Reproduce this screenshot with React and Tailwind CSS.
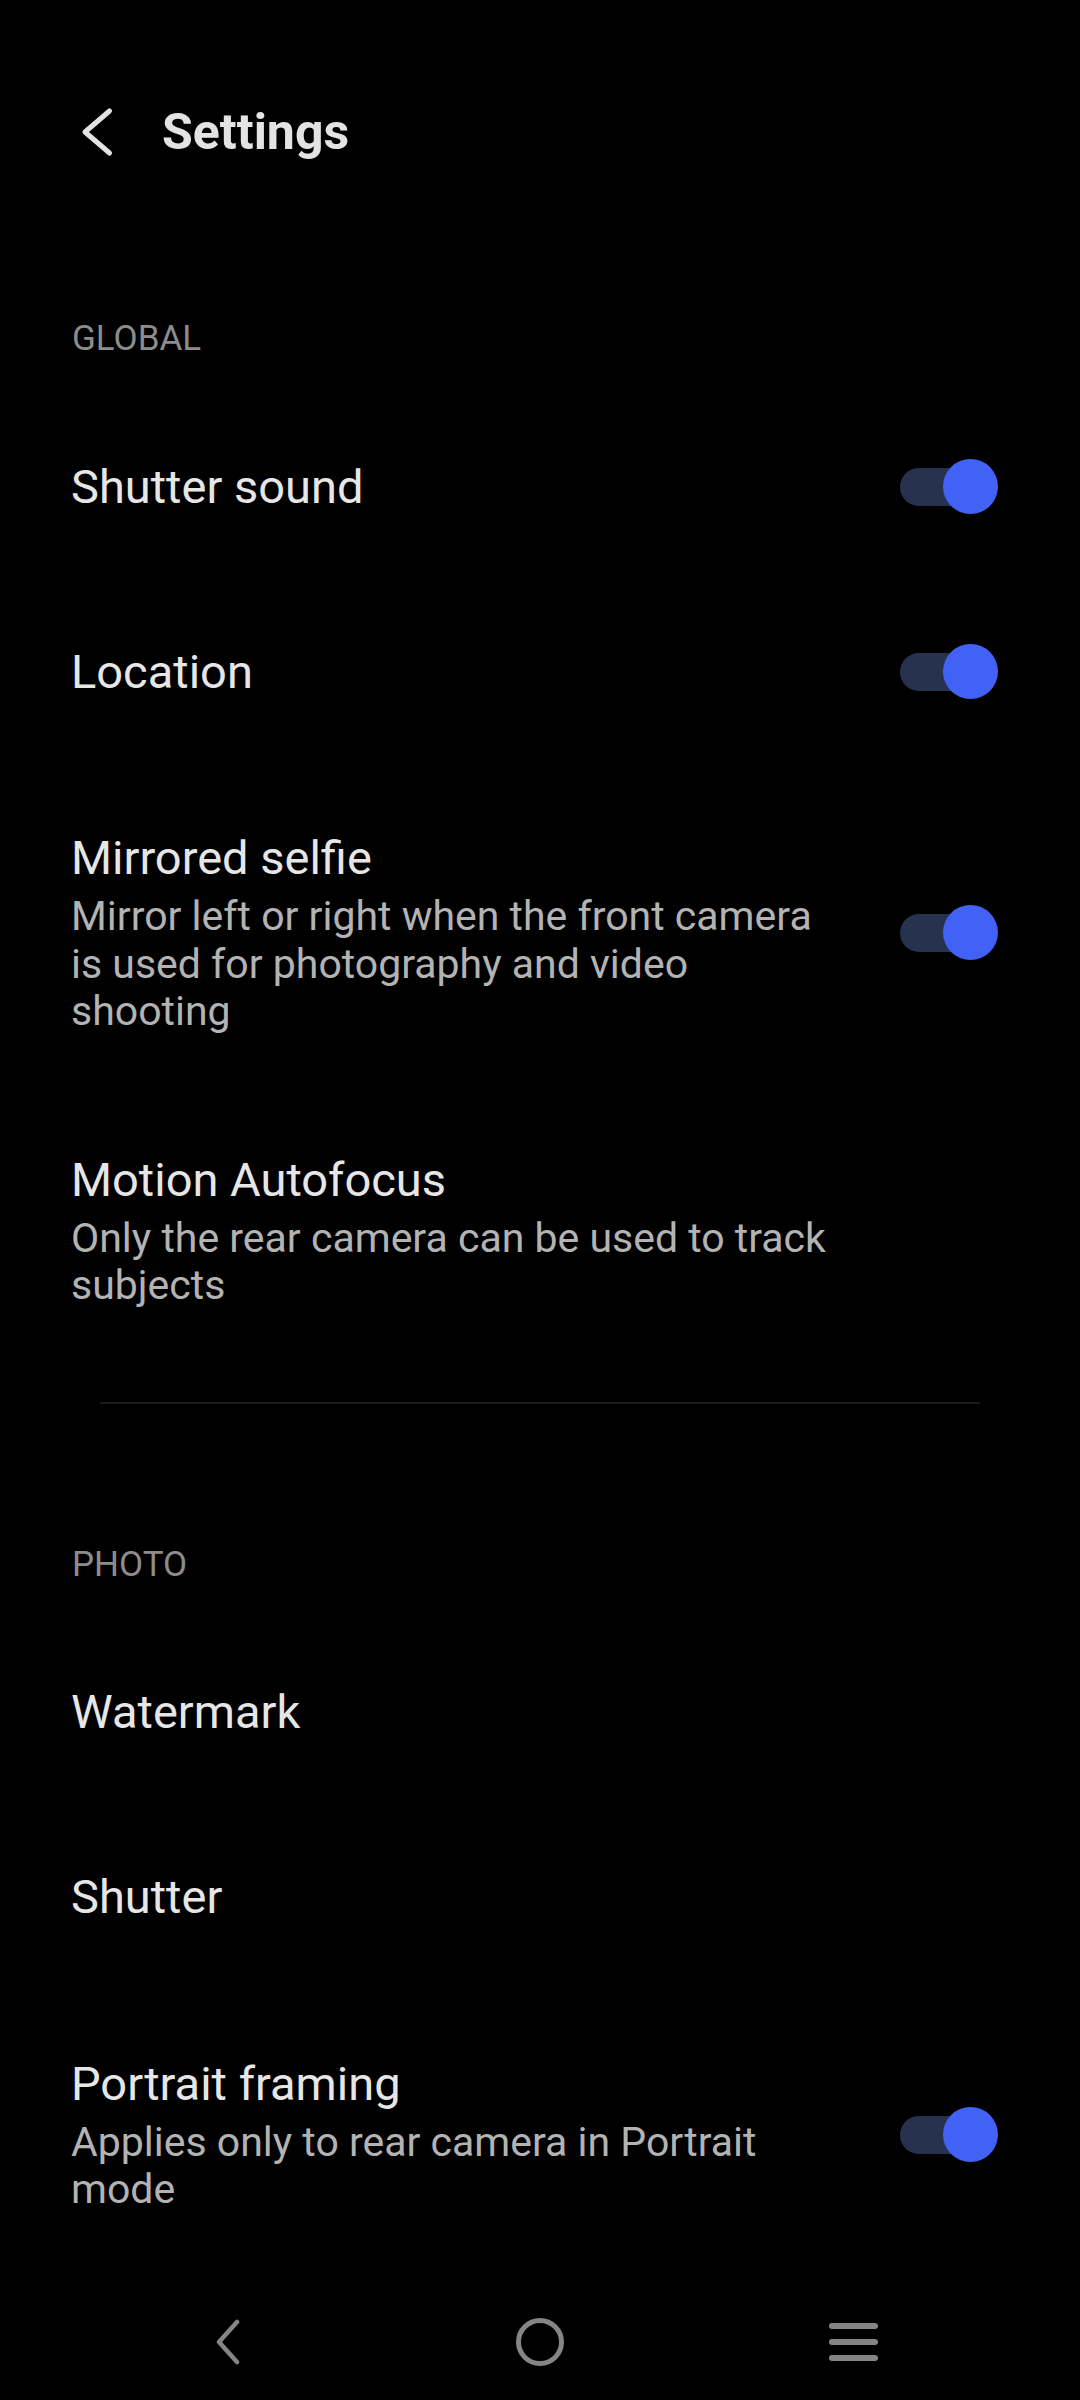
import React, { useState } from "react";

const font = { fontFamily: "Roboto, 'Noto Sans', sans-serif" };

function Toggle({ on, onChange }) {
  return (
    <button onClick={onChange} className="relative w-[98px] h-[55px] shrink-0">
      <span className={`absolute left-0 top-[8.5px] w-[80px] h-[38px] rounded-full ${on ? "bg-[#27324f]" : "bg-[#3a3a3a]"}`} />
      <span
        className={`absolute top-0 w-[55px] h-[55px] rounded-full ${on ? "right-0 bg-[#4262f5]" : "left-[-8px] bg-[#9a9a9a]"}`}
      />
    </button>
  );
}

function SectionLabel({ children, className = "" }) {
  return (
    <div className={`pl-[72px] text-[35px] leading-[42px] text-[#8c8c8c] ${className}`}>{children}</div>
  );
}

function Row({ title, desc, toggle, on, onToggle }) {
  if (!desc) {
    return (
      <div className="h-[185px] flex items-center pl-[71px] pr-[82px]">
        <div className="flex-1 text-[47px] leading-[56px] text-[#e6e6e6]">{title}</div>
        {toggle && <Toggle on={on} onChange={onToggle} />}
      </div>
    );
  }
  return (
    <div className="flex items-center pl-[71px] pr-[82px] pt-[66px] pb-[50px]">
      <div className="w-[771px] shrink-0">
        <div className="text-[47px] leading-[56px] text-[#e6e6e6]">{title}</div>
        <div className="mt-[7px] text-[41px] leading-[47.5px] text-[#b3b3b3]">{desc}</div>
      </div>
      <div className="flex-1" />
      {toggle && <Toggle on={on} onChange={onToggle} />}
    </div>
  );
}

export default function App() {
  const [state, setState] = useState({
    shutterSound: true,
    location: true,
    mirrored: true,
    portrait: true,
  });
  const flip = (k) => setState((s) => ({ ...s, [k]: !s[k] }));

  return (
    <div className="min-h-[2400px] bg-black flex flex-col" style={font}>
      <div className="flex-1">
        {/* header */}
        <div className="mt-[72px] h-[120px] flex items-center">
          <button className="ml-[80px]">
            <svg width="34" height="50" viewBox="0 0 34 50" fill="none">
              <path d="M29.5 4 L5 25 L29.5 46" stroke="#e3e3e3" strokeWidth="5" strokeLinecap="round" strokeLinejoin="round" />
            </svg>
          </button>
          <h1 className="ml-[48px] text-[50px] leading-[60px] font-bold text-[#e3e3e3]">Settings</h1>
        </div>

        <SectionLabel className="mt-[126px] mb-[34px]">GLOBAL</SectionLabel>

        <Row title="Shutter sound" toggle on={state.shutterSound} onToggle={() => flip("shutterSound")} />
        <Row title="Location" toggle on={state.location} onToggle={() => flip("location")} />
        <Row
          title="Mirrored selfie"
          desc="Mirror left or right when the front camera is used for photography and video shooting"
          toggle
          on={state.mirrored}
          onToggle={() => flip("mirrored")}
        />
        <Row title="Motion Autofocus" desc="Only the rear camera can be used to track subjects" />

        <div className="mt-[42px] mx-[100px] h-[2px] bg-[#1a1a1a]" />

        <SectionLabel className="mt-[140px] mb-[34px]">PHOTO</SectionLabel>

        <Row title="Watermark" />
        <Row title="Shutter" />
        <Row
          title="Portrait framing"
          desc="Applies only to rear camera in Portrait mode"
          toggle
          on={state.portrait}
          onToggle={() => flip("portrait")}
        />
      </div>

      {/* system nav bar */}
      <div className="h-[116px] flex items-center justify-between px-[177px]">
        <div className="w-[100px] flex justify-center">
          <svg width="32" height="46" viewBox="0 0 32 46" fill="none">
            <path d="M26 3 L8 23 L26 43" stroke="#858585" strokeWidth="4.5" strokeLinecap="round" strokeLinejoin="round" />
          </svg>
        </div>
        <div className="w-[100px] flex justify-center">
          <svg width="50" height="50" viewBox="0 0 50 50" fill="none">
            <circle cx="25" cy="25" r="21.5" stroke="#858585" strokeWidth="5" />
          </svg>
        </div>
        <div className="w-[100px] flex justify-center">
          <div className="flex flex-col gap-[10px]">
            <div className="w-[49px] h-[6px] rounded-full bg-[#858585]" />
            <div className="w-[49px] h-[6px] rounded-full bg-[#858585]" />
            <div className="w-[49px] h-[6px] rounded-full bg-[#858585]" />
          </div>
        </div>
      </div>
    </div>
  );
}
